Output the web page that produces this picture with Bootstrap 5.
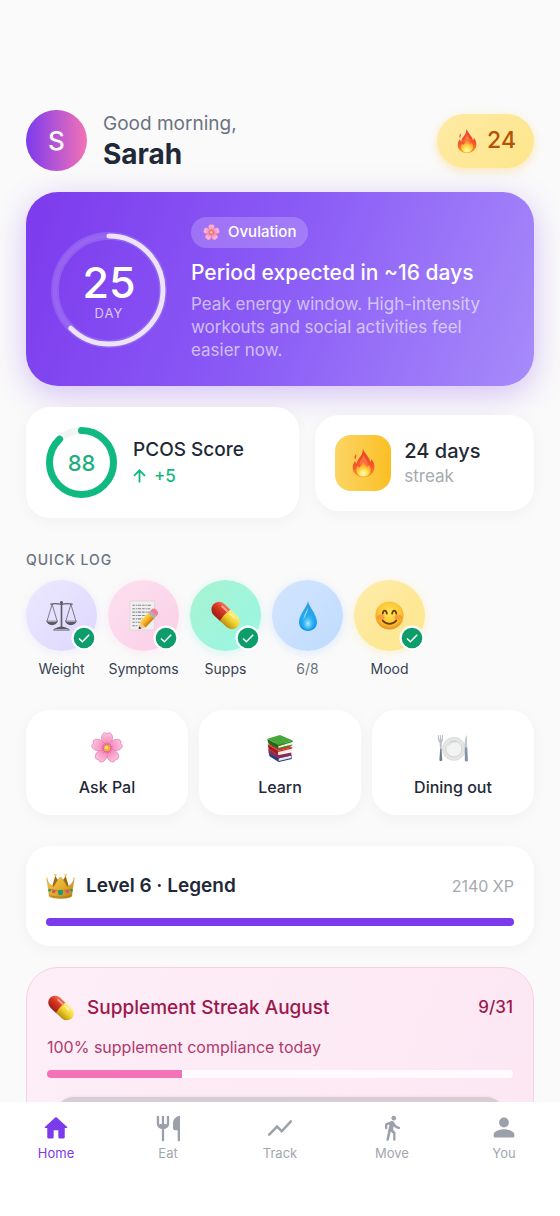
<!DOCTYPE html>
<html lang="en">
<head>
<meta charset="utf-8">
<meta name="viewport" content="width=device-width, initial-scale=1">
<title>Home</title>
<link rel="stylesheet" href="https://cdn.jsdelivr.net/npm/bootstrap@5.3.0/dist/css/bootstrap.min.css">
<style>
  :root { --ink: #1f2937; --violet: #7c3aed; --green: #10b981; --muted: #6b7280; --faint: #a6a9b0; }
  body { font-family: Inter, "Liberation Sans", sans-serif; color: var(--ink); background: #fafafa; }
  a { text-decoration: none; }
  .w500 { font-weight: 500; }
  .screen { overflow-x: hidden; scrollbar-width: none; padding: 110px 26px 24px; }
  .screen::-webkit-scrollbar { display: none; }
  .avatar { width: 61px; height: 61px; font-size: 26px; background: linear-gradient(90deg, #7c3aed, #f472b6); }
  .greet { font-size: 19px; line-height: 26px; color: var(--muted); }
  .user { font-size: 28px; line-height: 34px; }
  .fire-pill { height: 54px; padding: 0 18px 0 20px; gap: 10px; font-size: 23px; color: #b45309;
    background: linear-gradient(135deg, #feeaa5, #fde68a); box-shadow: 0 3px 10px rgba(251, 191, 36, .3); }
  .hero { margin-top: 21px; padding: 25px 25px 24px; gap: 24px; border-radius: 32px;
    background: linear-gradient(111deg, #7c3aed, #8b5cf6 50%, #a78bfa); box-shadow: 0 8px 32px rgba(124, 58, 237, .3); }
  .gauge { position: relative; display: grid; place-items: center; flex: none; }
  .gauge > * { grid-area: 1 / 1; }
  .day-num { font-size: 43px; line-height: 46px; }
  .day-cap { font-size: 13px; line-height: 16px; letter-spacing: 1px; color: rgba(255,255,255,.72); }
  .phase { height: 31px; padding: 0 12px; gap: 8px; font-size: 15px; background: rgba(255,255,255,.2); }
  .hero-title { margin: 12px 0 7px; font-size: 21px; line-height: 26px; }
  .hero-text { font-size: 17px; line-height: 23px; color: rgba(255,255,255,.62); }
  .tile { background: #fff; border-radius: 24px; box-shadow: 0 3px 16px rgba(0,0,0,.04); }
  .stats { display: grid; grid-template-columns: 5fr 4fr; margin-top: 21px; gap: 16px; }
  .stats .tile { padding: 20px; }
  .stat-a { gap: 16px; } .stat-b { gap: 13px; }
  .score { font-size: 22px; line-height: 26px; color: #1fae7e; }
  .tile-title { font-size: 19px; line-height: 26px; }
  .stat-b .tile-title { font-size: 20px; }
  .delta { font-size: 17px; line-height: 26px; color: var(--green); }
  .streak-box { width: 56px; height: 56px; border-radius: 16px; background: linear-gradient(90deg, #fcd566, #fbbf24); }
  .streak-cap { font-size: 17px; line-height: 24px; color: var(--faint); }
  .eyebrow { margin: 32px 0 10px; font-size: 14px; line-height: 20px; letter-spacing: 1px; color: var(--muted); }
  .logs { gap: 11px; }
  .log { width: 71px; padding: 0; color: #374151; }
  .log-dot { position: relative; width: 71px; height: 71px; }
  .log-dot .tick { position: absolute; right: 0; bottom: 0; }
  .log-name { margin-top: 8px; font-size: 14px; line-height: 20px; white-space: nowrap; }
  .violet { background: linear-gradient(135deg, #ede9fe, #ddd6fe); box-shadow: 0 2px 10px rgba(221,214,254,.4); }
  .rose { background: linear-gradient(135deg, #fce0ef, #fbcfe8); box-shadow: 0 2px 10px rgba(251,207,232,.4); }
  .mint { background: linear-gradient(135deg, #a7f3d0, #99f6e4); box-shadow: 0 2px 10px rgba(153,246,228,.4); }
  .sky { background: linear-gradient(135deg, #d3e5fe, #bfdbfe); box-shadow: 0 2px 10px rgba(191,219,254,.5); }
  .gold { background: linear-gradient(135deg, #feebaa, #fde68a); box-shadow: 0 2px 10px rgba(253,230,138,.4); }
  .links { margin-top: 31px; gap: 11px; }
  .links .tile { flex: 1 1 0; padding: 22px 8px 17px; font-size: 16px; line-height: 22px; color: var(--ink); gap: 12px; }
  .level { margin-top: 31px; padding: 24px 20px 20px; }
  .level-row { min-height: 32px; margin-bottom: 16px; gap: 11px; }
  .xp { font-size: 16px; color: var(--faint); }
  .progress { height: 8px; --bs-progress-border-radius: 4px; }
  .streak { margin-top: 21px; padding: 24px 20px; border: 1px solid #f9d0e2; border-radius: 32px; color: #9d174d;
    background: linear-gradient(111deg, #fdeef7, #fce7f3); }
  .streak-row { min-height: 32px; gap: 12px; }
  .streak-title { font-size: 19px; }
  .streak-count { font-size: 17px; }
  .streak-note { margin: 11px 0; font-size: 16px; line-height: 24px; color: #b03a6d; }
  .streak-panel { height: 64px; margin: 19px 9px 0; border-radius: 18px; background: #d9cdd5; box-shadow: 0 0 3px #e5d5df; }
  .tabs { background: #fff; padding: 12px 0 53px; }
  .tabs a { flex: 1 1 0; font-size: 13px; line-height: 20px; color: #a3a6ad; gap: 1px; }
  .tabs svg { color: #9ca0aa; }
  .tabs a.active, .tabs a.active svg { color: var(--violet); }
</style>
</head>
<body class="vh-100 d-flex flex-column">

<svg width="0" height="0" class="position-absolute" aria-hidden="true">
  <defs>
    <linearGradient id="gFire" x1="0" y1="0" x2="0" y2="1"><stop offset="0" stop-color="#e8402a"/><stop offset=".6" stop-color="#f4562a"/><stop offset="1" stop-color="#ff9a2a"/></linearGradient>
    <radialGradient id="gCore" cx=".5" cy=".8" r=".65"><stop offset="0" stop-color="#fffbd0"/><stop offset=".45" stop-color="#ffe14a"/><stop offset="1" stop-color="#ff9a2e"/></radialGradient>
    <linearGradient id="gRed" x1="0" y1="0" x2="0" y2="1"><stop offset="0" stop-color="#f4765a"/><stop offset=".4" stop-color="#dd3a24"/><stop offset="1" stop-color="#9d1d12"/></linearGradient>
    <linearGradient id="gYel" x1="0" y1="0" x2="0" y2="1"><stop offset="0" stop-color="#fff17a"/><stop offset=".5" stop-color="#efd02c"/><stop offset="1" stop-color="#b88d10"/></linearGradient>
    <linearGradient id="gDrop" x1="0" y1="0" x2="0" y2="1"><stop offset="0" stop-color="#3a9ad6"/><stop offset=".5" stop-color="#23a8f0"/><stop offset="1" stop-color="#0f92e8"/></linearGradient>
    <radialGradient id="gDropHi" cx=".5" cy=".65" r=".5"><stop offset="0" stop-color="#b5f0ff"/><stop offset="1" stop-color="#35bff8" stop-opacity="0"/></radialGradient>
    <radialGradient id="gFace" cx=".5" cy=".4" r=".62"><stop offset="0" stop-color="#ffe65c"/><stop offset=".65" stop-color="#fdc534"/><stop offset="1" stop-color="#e8891a"/></radialGradient>
    <radialGradient id="gPetal" cx="16" cy="16" r="15" gradientUnits="userSpaceOnUse"><stop offset="0" stop-color="#d63d84"/><stop offset=".35" stop-color="#f58fc0"/><stop offset="1" stop-color="#fdc0de"/></radialGradient>
    <linearGradient id="gCrown" x1="0" y1="0" x2="1" y2="1"><stop offset="0" stop-color="#f6d25a"/><stop offset=".5" stop-color="#e5ac2b"/><stop offset="1" stop-color="#b87d14"/></linearGradient>
    <linearGradient id="gPencil" x1="0" y1="0" x2="0" y2="1"><stop offset="0" stop-color="#ffd65a"/><stop offset=".5" stop-color="#f5b021"/><stop offset="1" stop-color="#c67b0e"/></linearGradient>

    <symbol id="fire" viewBox="0 0 24 30">
      <path fill="url(#gFire)" d="M11.4 0C12.6 3.6 16 6.800 18 10.200c.7 1.300 1.100 2.600 1.300 3.800.8-.7 1.200-1.800 1.200-3C22.600 13.500 24 16.500 23.700 20c-.4 5.900-5.200 10-11.600 10S.6 26 .4 20.300C.3 17 1.700 14.700 3.200 12.600c.1 1.500.6 2.500 1.500 3.200C5.300 11 8.900 8.700 10.200 5.600 10.900 3.800 11.200 2 11.400 0z"/>
      <path fill="#f0503a" d="M3.400 5.500c1 .7 1.300 1.900.7 3-.5 1-.6 1.700 0 2.600-1.500-.4-2.100-1.600-1.600-2.800.4-1 .9-1.700.9-2.800z"/>
      <path fill="#ff7a45" opacity=".8" d="M11.900 5.500c.3 3 2.800 5.200 4 8 .8 1.800 1 3.600.6 5.200l-9.200-2c.4-4.300 4.200-6.400 4.600-11.200z"/>
      <path fill="url(#gCore)" d="M12.100 14c.8 2.300 2.600 3.100 3.600 5 .8-.4 1.500-1.200 1.700-2.200 1.700 1.700 2.700 3.900 2.200 6.400-.7 3.800-3.700 6.300-7.700 6.300s-7.100-2.400-7.600-6c-.3-2.400.5-4.200 1.700-5.700.3 1 .9 1.700 1.700 2 .8-2.200 3.300-3.200 4.400-5.800z"/>
    </symbol>
    <symbol id="flower" viewBox="0 0 32 32">
      <g fill="url(#gPetal)" stroke="#e279ae" stroke-width=".7">
        <path id="petal" d="M16 16C10.500 11.500 9.400 5.500 11.500 2.200c1.200-1.700 3-1.800 4.500-.5 1.500-1.300 3.300-1.200 4.500.5C22.600 5.500 21.500 11.500 16 16z"/>
        <use href="#petal" transform="rotate(72 16 16)"/><use href="#petal" transform="rotate(144 16 16)"/><use href="#petal" transform="rotate(216 16 16)"/><use href="#petal" transform="rotate(288 16 16)"/>
      </g>
      <g stroke="#d9548f" stroke-width=".7" stroke-linecap="round"><path id="stamen" d="M16 16V10.500M16 16l2-4.500M16 16l-2-4.500"/><use href="#stamen" transform="rotate(72 16 16)"/><use href="#stamen" transform="rotate(144 16 16)"/><use href="#stamen" transform="rotate(216 16 16)"/><use href="#stamen" transform="rotate(288 16 16)"/></g>
      <circle cx="16" cy="16" r="3.200" fill="#f1b32d"/><circle cx="15.500" cy="15.500" r="1.600" fill="#ffe27a"/>
    </symbol>
    <symbol id="pill" viewBox="0 0 32 32">
      <g transform="rotate(43 16 16)">
        <path fill="url(#gRed)" d="M16.500 8H7a8 8 0 0 0 0 16h9.500z"/>
        <path fill="url(#gYel)" d="M15.500 8H25a8 8 0 0 1 0 16h-9.500q-1.600-8 0-16z"/>
        <path stroke="#fff" stroke-opacity=".5" stroke-width="1.800" stroke-linecap="round" d="M7 11.500h7M18 11.500h6"/>
      </g>
    </symbol>
    <symbol id="scales" viewBox="0 0 32 32">
      <g fill="none" stroke="#5d6068" stroke-linecap="round" stroke-linejoin="round">
        <path stroke-width="1.700" d="M16 3v25"/><path stroke-width="1.300" d="M5 4.200q5.500-1.200 11 .3 5.500-1.500 11-.3"/>
        <path stroke-width=".8" d="M6.300 4.500L1 22M6.300 4.500l5.300 17.500M25.700 4.500L20.400 22M25.700 4.500L31 22"/>
      </g>
      <g fill="#565962"><path d="M.4 21.500h11.800c-.4 2.800-3 4.500-5.900 4.500S.8 24.300.4 21.500zM19.800 21.500h11.800c-.4 2.800-3 4.500-5.900 4.500s-5.500-1.700-5.900-4.500z"/><path d="M7.500 31.500c.3-2.300 3-2.700 6.500-4h4c3.500 1.300 6.200 1.700 6.500 4z"/><circle cx="16" cy="2.600" r="1.500"/></g>
      <path stroke="#bfc1cc" stroke-width=".8" d="M1.500 22.300h9.500M21 22.300h9.500M9 30.500h14"/>
    </symbol>
    <symbol id="memo" viewBox="0 0 32 32">
      <path fill="#f0eeee" stroke="#d2ccd0" stroke-width=".6" d="M2 1h25.500v30H2z"/>
      <g stroke="#85858c" stroke-width="1.100" stroke-dasharray="2.600 .9 1.200 .8 3.600 1"><path d="M4.500 5.500H24M4.500 9H23M4.500 12.500h17M4.500 16h15M4.500 19.500h11M4.500 23h8M4.500 26.500h6"/></g>
      <g transform="rotate(-47 11 30)">
        <path fill="#f1c99a" d="M11 30l6-4.200v8.400z"/><path fill="#333" d="M11 30l2.500-1.700v3.400z"/>
        <path fill="url(#gPencil)" d="M17 25.800h13v8.400H17z"/><path fill="#a8b0b4" d="M30 25.800h3v8.400h-3z"/><path fill="#ed7d96" d="M33 25.800h1.500a3.500 4.200 0 0 1 0 8.400H33z"/>
      </g>
    </symbol>
    <symbol id="drop" viewBox="0 0 20 32">
      <path fill="url(#gDrop)" d="M10 0c.8 6 9.600 14.500 9.600 22.400C19.600 28 15.500 32 10 32S.4 28 .4 22.400C.4 14.500 9.200 6 10 0z"/>
      <ellipse cx="10" cy="21" rx="8" ry="10" fill="url(#gDropHi)"/><path fill="#d9f7ff" opacity=".6" d="M9.800 7c.4 5-2.500 8-4.500 13C5 15.500 8.600 11.500 9.800 7z"/>
    </symbol>
    <symbol id="smile" viewBox="0 0 32 32">
      <circle cx="16" cy="16" r="15.500" fill="url(#gFace)"/>
      <ellipse cx="6.500" cy="18" rx="4" ry="3" fill="#f47b35" opacity=".55"/><ellipse cx="25.500" cy="18" rx="4" ry="3" fill="#f47b35" opacity=".55"/>
      <g fill="none" stroke="#6b3d0c" stroke-width="2" stroke-linecap="round"><path d="M8.500 14c.6-4.600 4-4.600 4.600 0M18.900 14c.6-4.600 4-4.600 4.600 0M8.500 21.500c4 5 11 5 15 0"/></g>
    </symbol>
    <symbol id="books" viewBox="0 0 32 32">
      <path fill="#253a86" d="M3 21l11 6.500 15.500-3.500v4.500L14.500 32 4 25.500z"/><path fill="#e4e7f0" d="M14.500 27.800L29 24.600v2.800l-14.500 3.400z"/>
      <path fill="#8a2b4f" d="M2.500 17l12 7 14.500-3v3.500L14 28 3 21.500z"/>
      <path fill="#a51b1b" d="M2 12l12 7v5L3 17.500z"/><path fill="#d6342a" d="M2 12l15-3 13 6-16 4z"/><path fill="#efece6" d="M14.300 20l14.700-3.600v3.200L14.300 23z"/><path fill="#c52621" d="M14 19l16-4v1.500L14 20.500z"/>
      <path fill="#1f6b1c" d="M1.500 5.500L14 12.500v4.700L2.500 10.500z"/><path fill="#46a838" d="M1.500 5.500L16 1l14.500 6.500L14 12.500z"/><path fill="#f0f1e8" d="M14.300 13.800L29.500 9v3l-15.200 4.300z"/><path fill="#2f8c29" d="M14 12.500l16.500-5V9L14 14zM14 16l16-4v1.200L14 17.300z"/>
    </symbol>
    <symbol id="plate" viewBox="0 0 36 32">
      <circle cx="19" cy="17" r="13" fill="#e4e5e6" stroke="#d0d2d4" stroke-width=".6"/><circle cx="19" cy="17" r="9" fill="#f3f3f3" stroke="#c9cbcd" stroke-width=".8"/><path d="M13 13q3-5 9-4" fill="none" stroke="#c2c4c7"/>
      <path fill="#bcc0c5" d="M1 1.500h1l.4 5h.6l.3-5h1l.3 5h.6l.4-5h1.100c.3 4 .1 7.500-1.300 8.500L5.200 18H3.500l-.6-8C1.200 9 .7 5.500 1 1.500z"/><path fill="#6f7e92" d="M3.600 17h1.500l.8 12c0 2.600-3.200 2.600-3.200 0z"/>
      <path fill="#c2c7cb" d="M33.500 1.500c-2.200 2.500-2.600 8-2.300 14.500h2.800z"/><path fill="#8493a5" d="M31.300 15.500H34l.8 14c0 2.300-3.500 2.300-3.500 0z"/>
    </symbol>
    <symbol id="crown" viewBox="0 0 34 30">
      <path fill="#9c6a10" d="M7 18c1-7 3-11 4-15 2 4 4 7 6 8 2-1 4-4 6-8 1 4 3 8 4 15z"/>
      <path fill="url(#gCrown)" stroke="#ad7a15" stroke-width=".5" d="M3.800 27C3 20 2.200 14 1.200 7.500 3 12 6 15 9 15.500 11 13 12 9 17 4.500c5 4.500 6 8.500 8 11 3-.5 6-3.500 7.800-8C31.800 14 31 20 30.200 27 27 30.500 7 30.500 3.800 27z"/>
      <g fill="#f4cf58"><circle cx="1.300" cy="6.500" r="1.300"/><circle cx="11" cy="2" r="1.500"/><circle cx="23" cy="2" r="1.500"/><circle cx="32.700" cy="6.500" r="1.300"/></g>
      <path fill="none" stroke="#b37c14" d="M4 26c6 2.800 20 2.800 26 0M4 18.500c7 2.500 19 2.500 26 0"/>
      <g><circle cx="17" cy="22.500" r="3" fill="#159b80"/><circle cx="9" cy="21.500" r="2.100" fill="#d64c82"/><circle cx="25" cy="21.500" r="2.100" fill="#d64c82"/><circle cx="4.200" cy="20" r="1.500" fill="#1d9a7c"/><circle cx="29.800" cy="20" r="1.500" fill="#1d9a7c"/></g>
    </symbol>
    <symbol id="tick" viewBox="0 0 26 26">
      <circle cx="13" cy="13" r="12.500" fill="#fff"/><circle cx="13" cy="13" r="10.300" fill="#0d9d6b"/><path d="M8 13.500l3.400 3.300 6.800-7" fill="none" stroke="#fff" stroke-width="1.500"/>
    </symbol>
  </defs>
</svg>

<main class="screen flex-grow-1 overflow-auto">
  <header class="d-flex align-items-center">
    <div class="avatar w500 rounded-circle text-white d-flex align-items-center justify-content-center">S</div>
    <div class="ms-3">
      <div class="greet">Good morning,</div>
      <h1 class="user fw-bold mb-0">Sarah</h1>
    </div>
    <div class="fire-pill w500 rounded-pill d-flex align-items-center ms-auto">
      <svg width="20" height="24"><use href="#fire"/></svg><span>24</span>
    </div>
  </header>

  <section class="hero d-flex align-items-center text-white">
    <div class="gauge">
      <svg width="116" height="116" viewBox="0 0 116 116" fill="none">
        <circle cx="58" cy="58" r="54" stroke="#fff" stroke-opacity=".14" stroke-width="8"/>
        <circle cx="58" cy="58" r="54" stroke="#fff" stroke-opacity=".06" stroke-width="4"/>
        <circle cx="58" cy="58" r="54" stroke="#eee3fd" stroke-width="5" stroke-linecap="round" pathLength="100" stroke-dasharray="62.500 100" transform="rotate(-90 58 58)"/>
      </svg>
      <div class="text-center"><div class="day-num w500">25</div><div class="day-cap">DAY</div></div>
    </div>
    <div class="flex-grow-1">
      <div class="phase w500 rounded-pill d-inline-flex align-items-center align-top"><svg width="17" height="17"><use href="#flower"/></svg>Ovulation</div>
      <h2 class="hero-title w500">Period expected in ~16 days</h2>
      <p class="hero-text mb-0">Peak energy window. High-intensity workouts and social activities feel easier now.</p>
    </div>
  </section>

  <section class="stats align-items-center">
    <div class="tile stat-a d-flex align-items-center">
      <div class="gauge">
        <svg width="71" height="71" viewBox="0 0 71 71" fill="none" stroke-width="7">
          <circle cx="35.500" cy="35.500" r="32" stroke="#f3f4f6"/>
          <circle cx="35.500" cy="35.500" r="32" stroke="#10b981" stroke-linecap="round" pathLength="100" stroke-dasharray="88 100" transform="rotate(-90 35.500 35.500)"/>
        </svg>
        <span class="score w500">88</span>
      </div>
      <div>
        <div class="tile-title w500">PCOS Score</div>
        <div class="delta w500 d-flex align-items-center gap-2"><svg width="13" height="14" viewBox="0 0 13 14" fill="none" stroke="currentColor" stroke-width="1.800"><path d="M6.500 13.500V1.500M1 6.800l5.500-5.500L12 6.800"/></svg>+5</div>
      </div>
    </div>
    <div class="tile stat-b d-flex align-items-center">
      <div class="streak-box d-flex align-items-center justify-content-center flex-shrink-0"><svg width="23" height="28"><use href="#fire"/></svg></div>
      <div>
        <div class="tile-title w500">24 days</div>
        <div class="streak-cap">streak</div>
      </div>
    </div>
  </section>

  <h2 class="eyebrow w500">QUICK LOG</h2>
  <section class="logs d-flex">
    <button class="log btn border-0 d-flex flex-column align-items-center" type="button"><span class="log-dot violet rounded-circle d-flex align-items-center justify-content-center"><svg width="31" height="31"><use href="#scales"/></svg><svg class="tick" width="26" height="26"><use href="#tick"/></svg></span><span class="log-name">Weight</span></button>
    <button class="log btn border-0 d-flex flex-column align-items-center" type="button"><span class="log-dot rose rounded-circle d-flex align-items-center justify-content-center"><svg width="31" height="31"><use href="#memo"/></svg><svg class="tick" width="26" height="26"><use href="#tick"/></svg></span><span class="log-name">Symptoms</span></button>
    <button class="log btn border-0 d-flex flex-column align-items-center" type="button"><span class="log-dot mint rounded-circle d-flex align-items-center justify-content-center"><svg width="31" height="31"><use href="#pill"/></svg><svg class="tick" width="26" height="26"><use href="#tick"/></svg></span><span class="log-name">Supps</span></button>
    <button class="log btn border-0 d-flex flex-column align-items-center" type="button"><span class="log-dot sky rounded-circle d-flex align-items-center justify-content-center"><svg width="20" height="30"><use href="#drop"/></svg></span><span class="log-name text-secondary">6/8</span></button>
    <button class="log btn border-0 d-flex flex-column align-items-center" type="button"><span class="log-dot gold rounded-circle d-flex align-items-center justify-content-center"><svg width="29" height="29"><use href="#smile"/></svg><svg class="tick" width="26" height="26"><use href="#tick"/></svg></span><span class="log-name">Mood</span></button>
  </section>

  <section class="links d-flex">
    <a href="#pal" class="tile w500 d-flex flex-column align-items-center"><svg width="32" height="32"><use href="#flower"/></svg>Ask Pal</a>
    <a href="#learn" class="tile w500 d-flex flex-column align-items-center"><svg width="28" height="32"><use href="#books"/></svg>Learn</a>
    <a href="#dining" class="tile w500 d-flex flex-column align-items-center"><svg width="32" height="32"><use href="#plate"/></svg>Dining out</a>
  </section>

  <section class="tile level">
    <div class="level-row d-flex align-items-center">
      <svg width="29" height="28"><use href="#crown"/></svg>
      <span class="tile-title fw-semibold">Level 6 · Legend</span>
      <span class="xp ms-auto">2140 XP</span>
    </div>
    <div class="progress" role="progressbar" aria-label="Level progress" aria-valuenow="100" aria-valuemin="0" aria-valuemax="100"><div class="progress-bar" style="width:100%;background:#7c3aed"></div></div>
  </section>

  <section class="streak">
    <div class="streak-row d-flex align-items-center">
      <svg width="28" height="28"><use href="#pill"/></svg>
      <span class="streak-title w500">Supplement Streak August</span>
      <span class="streak-count w500 ms-auto">9/31</span>
    </div>
    <p class="streak-note">100% supplement compliance today</p>
    <div class="progress" style="background:#fffafd" role="progressbar" aria-label="Supplement streak" aria-valuenow="29" aria-valuemin="0" aria-valuemax="100"><div class="progress-bar" style="width:29%;background:#f472b6"></div></div>
    <div class="streak-panel"></div>
  </section>
</main>

<nav class="tabs d-flex flex-shrink-0">
  <a href="#home" class="active d-flex flex-column align-items-center"><svg width="28" height="28" viewBox="0 0 24 24" fill="currentColor"><path d="M10 20v-6h4v6c0 .6.400 1 1 1h3.500c.6 0 1-.4 1-1v-8h1.700c.46 0 .68-.57.33-.87L12.670 3.100c-.38-.34-.96-.34-1.340 0l-8.860 8.030c-.34.3-.13.87.33.87h1.700v8c0 .6.400 1 1 1H9c.6 0 1-.4 1-1z"/></svg>Home</a>
  <a href="#eat" class="d-flex flex-column align-items-center"><svg width="28" height="28" viewBox="0 0 24 24" fill="none" stroke="currentColor" stroke-width="2" stroke-linecap="round"><path d="M3.400 2.600v5.900c0 2 1.800 3.500 4.300 3.500s4.300-1.500 4.300-3.500V2.600M7.700 2.600V22.500M21.300 12v10.500"/><path d="M4.400 8.500h6.600V10c-1 2-5.600 2-6.600 0zM22.300 1.600c-3.500.2-6 3.200-6 6.700V12c0 1.200.8 2 2 2h4z" fill="currentColor" stroke="none"/></svg>Eat</a>
  <a href="#track" class="d-flex flex-column align-items-center"><svg width="28" height="28" viewBox="0 0 24 24" fill="none" stroke="currentColor" stroke-width="2.100" stroke-linecap="round"><path d="M2.700 17.700l6.800-6.900 4 4L21.300 6.300"/></svg>Track</a>
  <a href="#move" class="d-flex flex-column align-items-center"><svg width="28" height="28" viewBox="0 0 24 24" fill="currentColor"><path d="M13.500 5.500c1.100 0 2-.9 2-2s-.9-2-2-2-2 .9-2 2 .9 2 2 2zM9.800 8.900L7.240 21.810c-.13.61.35 1.190.98 1.190h.08c.47 0 .87-.32.98-.78L10.900 15l2.100 2v5c0 .55.45 1 1 1s1-.45 1-1v-5.640c0-.55-.22-1.070-.62-1.450L12.900 13.500l.6-3c1.070 1.240 2.620 2.130 4.360 2.410.6.090 1.140-.39 1.140-1 0-.49-.36-.9-.85-.98-1.520-.25-2.780-1.150-3.450-2.330l-1-1.600c-.56-.89-1.680-1.250-2.660-.84L7.220 7.780C6.480 8.100 6 8.820 6 9.630V12c0 .55.45 1 1 1s1-.45 1-1V9.600l1.800-.7"/></svg>Move</a>
  <a href="#you" class="d-flex flex-column align-items-center"><svg width="28" height="28" viewBox="0 0 24 24" fill="currentColor"><path d="M12 11.500c2.300 0 4.200-1.900 4.200-4.200S14.300 3.100 12 3.100 7.800 5 7.800 7.300s1.900 4.200 4.200 4.200zM12 13c-3 0-8.900 1.500-8.900 4.500V19c0 .7.500 1.200 1.200 1.200h15.400c.7 0 1.200-.5 1.200-1.200v-1.500c0-3-5.900-4.500-8.900-4.500z"/></svg>You</a>
</nav>

<script src="https://cdn.jsdelivr.net/npm/bootstrap@5.3.0/dist/js/bootstrap.bundle.min.js"></script>
</body>
</html>
